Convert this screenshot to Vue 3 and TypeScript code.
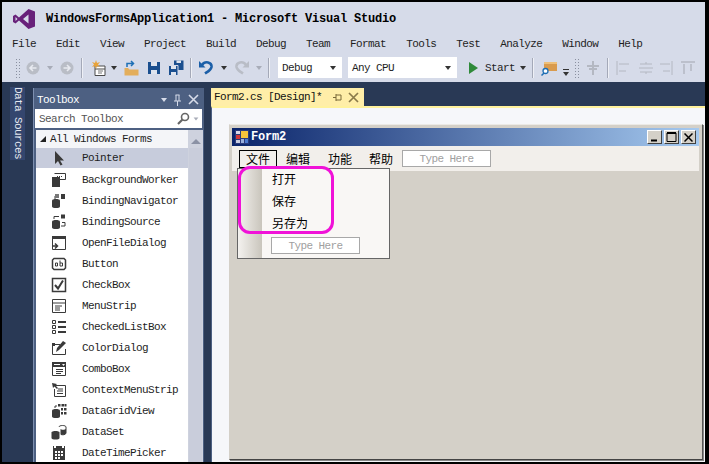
<script setup lang="ts">
interface Shape { d: string; fill?: string; stroke?: string; sw?: number }
interface Tool { name: string; icon: Shape[] }

const D = '#3a3a3a'
const menus = ['File', 'Edit', 'View', 'Project', 'Build', 'Debug', 'Team', 'Format', 'Tools', 'Test', 'Analyze', 'Window', 'Help']
const line = (d: string, sw = 1, stroke = D): Shape => ({ d, stroke, sw, fill: 'none' })
const solid = (d: string, fill = D): Shape => ({ d, fill })
const db = 'M1 7.500C1 5.500 9 5.500 9 7.500V13.500C9 15.500 1 15.500 1 13.500Z'

const tools: Tool[] = [
  { name: 'Pointer', icon: [solid('M4 1V14L7 11L9.500 15.500L11.500 14.500L9 10.500H13Z')] },
  { name: 'BackgroundWorker', icon: [solid('M1 5H9V15H1Z'), line('M3.500 1.500H14.500V7.500H9'), solid('M6 4H7V5H6ZM8 4H9V5H8ZM10 4H11V5H10Z')] },
  { name: 'BindingNavigator', icon: [solid(db), line('M4 3V6'), solid('M10 1H14V6H10Z'), solid('M4 1H8V5H4Z', '#777')] },
  { name: 'BindingSource', icon: [solid(db), line('M3 5V2.500H8M11 8.500H14V12H10', 1), solid('M10 0.500H14V4.500H10Z')] },
  { name: 'OpenFileDialog', icon: [line('M1.500 1.500H14.500V14.500H1.500Z'), solid('M1 1H15V4H1Z'), line('M1 11H6M4 8.500L6.500 11L4 13.500', 1.500)] },
  { name: 'Button', icon: [line('M3 2.500H13L14.500 4V12L13 13.500H3L1.500 12V4Z', 1.500), line('M4.500 10V7H6.500V10H4.500M9 4.500V10H11.500V7H9')] },
  { name: 'CheckBox', icon: [line('M1.500 1.500H14.500V14.500H1.500Z', 1.500), line('M4 8L7 11.500L12 3.500', 2)] },
  { name: 'MenuStrip', icon: [line('M1.500 1.500H14.500V14.500H1.500ZM1.500 5H14.500'), line('M4 8H11M4 10H9M4 12H9')] },
  { name: 'CheckedListBox', icon: [line('M1.500 1.500H4.500V4.500H1.500ZM1.500 6.500H4.500V9.500H1.500ZM1.500 11.500H4.500V14.500H1.500Z'), solid('M7 2H15V4H7ZM7 7H15V9H7ZM7 12H15V14H7Z')] },
  { name: 'ColorDialog', icon: [line('M1.500 4.500H9M1.500 4.500V14.500H14.500V9', 1), solid('M1 3H4V6H1ZM3 14H14V15H3Z'), solid('M12 1L15 3L8 10L5 12L6 8Z')] },
  { name: 'ComboBox', icon: [line('M1.500 1.500H14.500V14.500H1.500Z'), solid('M1 1H15V6H1Z'), solid('M3 3H9V4H3Z', '#fff'), solid('M11 3H14L12.500 5Z', '#fff'), line('M5 8.500H12M5 10.500H12M5 12.500H10')] },
  { name: 'ContextMenuStrip', icon: [line('M3 3.500H14.500V14.500H3.500V7'), solid('M1 1L6 2L4.500 3.500L7 6L6 7L3.500 4.500L2 6Z'), line('M7 7H12M6 9H12M6 11.500H12')] },
  { name: 'DataGridView', icon: [solid(db), line('M4 5V3H6'), solid('M7 1H9.500V3.500H7ZM10.500 1H13V3.500H10.500ZM13.500 1H15.500V3.500H13.500ZM10 5H12V7.500H10ZM13 5H15.500V7.500H13ZM10 9H12V11.500H10ZM13 9H15.500V11.500H13Z')] },
  { name: 'DataSet', icon: [solid('M0.500 8.500C0.500 6.500 8.500 6.500 8.500 8.500V14C8.500 16 0.500 16 0.500 14Z'), line('M8 3C8 1 15 1 15 3V9C15 11 11 11 10 10.500', 1), solid('M9.500 5C10 6 14 6 15 5V9.500C13 11 11 11 9.500 10.500Z')] },
  { name: 'DateTimePicker', icon: [solid('M2 1H14V15H2Z'), solid('M3 1H5V3H3ZM11 1H13V3H11Z', '#fff'), solid('M4 6H6V8H4ZM7 6H9V8H7ZM10 6H12V8H10ZM4 9H6V11H4ZM7 9H9V11H7ZM10 9H12V11H10ZM4 12H6V14H4ZM7 12H9V14H7Z', '#fff')] },
]
</script>

<template>
  <div class="frame">
    <header class="titlebar">
      <svg class="logo" viewBox="0 0 22 20" width="22" height="20">
        <path fill="#68217a" d="M15.500 0L22 2.500V17.500L15.500 20L6 11.500L2.500 14.500L0 13V7L2.500 5.500L6 8.500ZM15.500 5.500L10 10L15.500 14.500ZM2.500 8V12L4.500 10Z" />
      </svg>
      <span class="title">WindowsFormsApplication1 - Microsoft Visual Studio</span>
    </header>

    <nav class="menubar">
      <span v-for="m in menus" :key="m">{{ m }}</span>
    </nav>

    <div class="toolbar">
      <i class="grip"></i>
      <svg class="back" width="16" height="16" viewBox="0 0 16 16"><circle cx="8" cy="8" r="6.500" fill="#b9bdc6" /><path d="M11.500 8H5M8 5L5 8L8 11" stroke="#e8eaf0" stroke-width="1.600" fill="none" /></svg>
      <i class="caret off c1"></i>
      <svg class="fwd" width="16" height="16" viewBox="0 0 16 16"><circle cx="8" cy="8" r="6.500" fill="#b9bdc6" /><path d="M4.500 8H11M8 5L11 8L8 11" stroke="#e8eaf0" stroke-width="1.600" fill="none" /></svg>
      <i class="sep s1"></i>
      <svg class="newp" width="16" height="18" viewBox="0 0 16 18"><path d="M4 7H14V16.500H4Z M4 10H14" stroke="#4a4a4a" fill="#fff" /><path d="M5 1L6 4L9 3L7 5.500L9 8L6 7L5 10L4 7L1 8L3 5.500L1 3L4 4Z" fill="#e8a33a" /><path d="M7 12H12M7 14H11" stroke="#777" /></svg>
      <i class="caret c2"></i>
      <svg class="open" width="15" height="16" viewBox="0 0 15 16"><path d="M0.500 8H4L5.500 9.500H14.500V15.500H0.500Z" fill="#e3ae5c" /><path d="M3 7V3.500H9M7 1L9.500 3.500L7 6" stroke="#1e6fb5" stroke-width="1.500" fill="none" /></svg>
      <svg class="save" width="14" height="14" viewBox="0 0 14 14"><path d="M1 1H13V13H1Z" fill="#1b4f8f" /><path d="M4 1H10V5H4ZM4 9H10V13H4Z" fill="#dfe4ee" /></svg>
      <svg class="saveall" width="16" height="16" viewBox="0 0 16 16"><path d="M6 0.500H15.500V10H6Z" fill="#1b4f8f" /><path d="M8.500 0.500H13V3H8.500Z" fill="#dfe4ee" /><path d="M0.500 5.500H10V15.500H0.500Z" fill="#1b4f8f" stroke="#d6dbe9" /><path d="M3 6H8V9H3ZM3 12H8V15H3Z" fill="#dfe4ee" /></svg>
      <i class="sep s2"></i>
      <svg class="undo" width="14" height="15" viewBox="0 0 14 15"><path d="M3 5C6 0.500 13 2 12.500 7C12 10 9 11.500 6 13.500" stroke="#1b5fa8" stroke-width="2.600" fill="none" /><path d="M0 1V7.500H6.500Z" fill="#1b5fa8" /></svg>
      <i class="caret c3"></i>
      <svg class="redo" width="14" height="15" viewBox="0 0 14 15"><path d="M11 5C8 0.500 1 2 1.500 7C2 10 5 11.500 8 13.500" stroke="#b9bdc6" stroke-width="2.600" fill="none" /><path d="M14 1V7.500H7.500Z" fill="#b9bdc6" /></svg>
      <i class="caret off c4"></i>
      <i class="sep s3"></i>
      <div class="combo debug"><span>Debug</span><i class="caret"></i></div>
      <div class="combo cpu"><span>Any CPU</span><i class="caret"></i></div>
      <i class="play"></i>
      <span class="start">Start</span>
      <i class="caret c5"></i>
      <i class="sep s4"></i>
      <svg class="find" width="16" height="16" viewBox="0 0 16 16"><path d="M3 2H16V11H3Z" fill="#d99b4e" /><path d="M3 2H16V4H3Z" fill="#eec07a" /><circle cx="4.500" cy="11" r="2.500" fill="#fff" stroke="#1e6fb5" stroke-width="1.300" /><path d="M3 13L0.500 15.500" stroke="#1e6fb5" stroke-width="1.500" /></svg>
      <i class="more"></i>
      <i class="grip g2"></i>
      <svg class="align a0" width="14" height="14" viewBox="0 0 14 14"><path d="M7 0V14M1 5H13M3 8H11" stroke="#b4b8c2" stroke-width="2" /></svg>
      <i class="sep s5"></i>
      <svg class="align a1" width="14" height="14" viewBox="0 0 14 14"><path d="M1 0V14M3 3H13M3 10H10" stroke="#b4b8c2" /></svg>
      <svg class="align a2" width="14" height="14" viewBox="0 0 14 14"><path d="M1 3H13M1 11H13M0 7H14M7 1V3M7 11V13" stroke="#b4b8c2" /></svg>
      <svg class="align a3" width="14" height="14" viewBox="0 0 14 14"><path d="M13 0V14M1 3H11M4 10H11" stroke="#b4b8c2" /></svg>
      <svg class="align a4" width="14" height="14" viewBox="0 0 14 14"><path d="M0 1H14M3 3V13M10 3V10" stroke="#b4b8c2" stroke-width="1.500" /></svg>
    </div>

    <main class="workspace">
      <aside class="strip"><span>Data Sources</span></aside>

      <section class="toolbox">
        <div class="tb-head">
          <span>Toolbox</span>
          <span class="tb-actions">
            <i class="caret light"></i>
            <svg width="9" height="12" viewBox="0 0 9 12"><path d="M2.500 1H6.500M3 1V7M6 1V7M1 7H8M4.500 7V12" stroke="#d6dbe9" fill="none" /></svg>
            <svg width="11" height="11" viewBox="0 0 11 11"><path d="M1 1L10 10M10 1L1 10" stroke="#d6dbe9" stroke-width="1.600" /></svg>
          </span>
        </div>
        <div class="tb-search">
          <span>Search Toolbox</span>
          <svg class="mag" width="13" height="13" viewBox="0 0 13 13"><circle cx="8" cy="5" r="3.500" fill="none" stroke="#666" stroke-width="1.600" /><path d="M5.500 7.500L1 12" stroke="#666" stroke-width="2.200" /></svg>
          <i class="caret off small"></i>
        </div>
        <div class="tb-body">
          <div class="tb-list">
            <div class="group"><i class="tri"></i>All Windows Forms</div>
            <div v-for="(t, i) in tools" :key="t.name" class="row" :class="{ active: i === 0 }">
              <svg width="16" height="16" viewBox="0 0 16 16">
                <path v-for="(s, j) in t.icon" :key="j" :d="s.d" :fill="s.fill" :stroke="s.stroke" :stroke-width="s.sw" />
              </svg>
              <span>{{ t.name }}</span>
            </div>
          </div>
          <div class="scroll"><i class="up"></i><div class="thumb"></div></div>
        </div>
      </section>

      <section class="doc">
        <div class="tabs">
          <div class="tab">
            <span>Form2.cs [Design]*</span>
            <svg width="9" height="9" viewBox="0 0 9 9"><path d="M0 4.500H3M3 2H8M3 7H8M3 1V8M8 2V7" stroke="#7a6a3a" fill="none" /></svg>
            <svg width="11" height="11" viewBox="0 0 11 11"><path d="M1 1L10 10M10 1L1 10" stroke="#8a7a4a" stroke-width="1.700" /></svg>
          </div>
        </div>
        <div class="canvas">
          <div class="form">
            <div class="form-title">
              <svg width="14" height="14" viewBox="0 0 14 14">
                <path d="M0 0H14V14H0Z" fill="#2a3a7a" />
                <path d="M1 1H5V4H1Z" fill="#d9d9e8" />
                <path d="M6 1H13V8H6Z" fill="#f5c33b" />
                <path d="M1 5H5V9H1Z" fill="#d0383a" />
                <path d="M6 9H9V13H6Z" fill="#9ab0dc" />
                <path d="M10 9H13V13H10Z" fill="#4a7ad0" />
                <path d="M1 10H5V13H1Z" fill="#c9cde0" />
              </svg>
              <span class="form-name">Form2</span>
              <div class="winbtns">
                <button><svg width="9" height="9" viewBox="0 0 9 9"><path d="M1 7.500H7" stroke="#000" stroke-width="2" /></svg></button>
                <button><svg width="11" height="10" viewBox="0 0 11 10"><path d="M1 1H10V9.500H1Z" stroke="#000" fill="none" /><path d="M1 1H10" stroke="#000" stroke-width="2" /></svg></button>
                <button><svg width="9" height="9" viewBox="0 0 9 9"><path d="M0.500 0.500L8.500 8.500M8.500 0.500L0.500 8.500" stroke="#000" stroke-width="1.500" /></svg></button>
              </div>
            </div>
            <div class="strip-menu">
              <span class="m open-m">文件</span>
              <span class="m wide">编辑</span>
              <span class="m">功能</span>
              <span class="m">帮助</span>
              <span class="typehere top">Type Here</span>
            </div>
            <div class="client">
              <div class="dropdown">
                <div class="margin"></div>
                <div class="items">
                  <div class="item">打开</div>
                  <div class="item">保存</div>
                  <div class="item">另存为</div>
                  <span class="typehere sub">Type Here</span>
                </div>
              </div>
              <div class="marker"></div>
            </div>
          </div>
        </div>
      </section>
    </main>
  </div>
</template>

<style>
html, body { margin: 0; overflow: hidden; background: #000; }
</style>

<style scoped>
.frame {
  width: 709px; height: 464px; box-sizing: border-box;
  border: solid #000; border-width: 2px 4px 2px 2px;
  background: #d6dbe9; display: flex; flex-direction: column; overflow: hidden;
  font: 11px/12px "Liberation Mono", "Noto Sans CJK SC", monospace;
  letter-spacing: -0.6px; color: #1e1e1e;
}
i { display: block; flex: none; }
svg { display: block; flex: none; }

.titlebar { height: 29px; display: flex; align-items: flex-start; padding: 7px 0 0 11px; box-sizing: border-box; flex: none; }
.title { margin: 4px 0 0 11px; font-weight: 700; font-size: 12px; letter-spacing: -0.2px; color: #000; }

.menubar { height: 22px; flex: none; display: flex; gap: 20px; padding: 7px 0 0 10px; box-sizing: border-box; }

.toolbar { height: 29px; flex: none; display: flex; align-items: center; box-sizing: border-box; }
.grip { width: 5px; height: 20px; margin-left: 13px; background-image: radial-gradient(#8a90a0 0.6px, transparent 0.9px); background-size: 3px 3px; }
.sep { width: 1px; height: 20px; background: #a4a9b8; box-shadow: 1px 0 #eef0f6; }
.caret { width: 0; height: 0; border: 3.500px solid transparent; border-top: 4px solid #333; border-bottom: 0; }
.caret.off { border-top-color: #a8acb8; }
.caret.light { border-top-color: #d6dbe9; }
.back { margin-left: 5px; }
.c1 { margin-left: 6px; }
.fwd { margin-left: 6px; }
.s1 { margin-left: 6px; }
.newp { margin-left: 9px; }
.c2 { margin-left: 4px; }
.open { margin-left: 7px; }
.save { margin-left: 8px; }
.saveall { margin-left: 7px; }
.s2 { margin-left: 6px; }
.undo { margin-left: 8px; }
.c3 { margin-left: 7.500px; }
.redo { margin-left: 8.500px; }
.c4 { margin-left: 6.500px; }
.s3 { margin-left: 6.500px; }
.combo { height: 21px; background: #fff; display: flex; align-items: center; justify-content: space-between; padding: 0 6px 0 4px; box-sizing: border-box; flex: none; }
.debug { width: 64px; margin-left: 9px; }
.cpu { width: 109px; margin-left: 6px; }
.play { width: 0; height: 0; border: solid transparent; border-width: 6px 0 6px 9px; border-left-color: #2f8a3a; margin-left: 12px; }
.start { margin-left: 7px; }
.c5 { margin-left: 4.500px; }
.s4 { margin-left: 6.500px; }
.find { margin-left: 8px; }
.more { width: 6px; height: 7px; margin: 9px 0 0 6px; border-top: 1px solid #333; box-sizing: border-box; position: relative; }
.more::after { content: ""; display: block; margin-top: 2px; border: 3px solid transparent; border-top: 4px solid #333; border-bottom: 0; width: 0; }
.g2 { margin-left: 5px; }
.a0 { margin-left: 7px; }
.s5 { margin-left: 7px; }
.a1 { margin-left: 8px; }
.a2 { margin-left: 9px; }
.a3 { margin-left: 6px; }
.a4 { margin-left: 8px; }

.workspace { flex: 1; min-height: 0; background: #293955; display: grid; grid-template-columns: 31px 171px 1fr; column-gap: 0; padding-top: 6px; }
.strip { margin: -1px 8px 0 8px; height: 73px; background: #34466e; color: #e6e9f2; display: flex; justify-content: center; }
.strip span { writing-mode: vertical-rl; line-height: 14px; }

.toolbox { background: #4d6082; display: flex; flex-direction: column; min-height: 0; margin-right: 0; border-left: 1px solid #7d8fb0; overflow: hidden; }
.tb-head { height: 21px; flex: none; display: flex; align-items: center; justify-content: space-between; padding: 2px 5px 0 3px; box-sizing: border-box; color: #fff; }
.tb-actions { display: flex; align-items: center; gap: 6px; }
.tb-search { height: 19px; flex: none; background: #fff; margin: 0 2px 2px 1px; display: flex; align-items: center; padding-left: 4px; color: #555; }
.mag { margin-left: auto; }
.small { margin: 0 3px 0 3px; transform: scale(.8); }
.tb-body { flex: 1; min-height: 0; display: flex; background: #fff; margin: 0 1px 0 2px; overflow: hidden; }
.tb-list { width: 152px; flex: none; background: #fff; }
.group { height: 18px; display: flex; align-items: center; background: #f4f5f8; padding-left: 4px; }
.tri { width: 0; height: 0; border: solid transparent; border-width: 0 0 6px 6px; border-bottom-color: #222; margin-right: 4px; }
.row { height: 21px; display: flex; align-items: center; padding-left: 15px; }
.row.active { background: #c7ccdc; height: 20px; margin-bottom: 1px; width: 150px; }
.row span { margin-left: 15px; }
.scroll { width: 15px; flex: none; background: #ced2de; }
.up { width: 0; height: 0; margin: 9px auto 0; border: solid transparent; border-width: 0 5px 5px; border-bottom-color: #8b92a5; }
.thumb { height: 100%; margin: 4px 1px 0; background: #c9cddb; }

.doc { display: flex; flex-direction: column; min-height: 0; margin-left: 7px; }
.tabs { height: 18px; flex: none; }
.tab { width: 153px; height: 18px; background: #ffeea8; display: flex; align-items: center; box-sizing: border-box; padding-left: 3px; color: #111; }
.tab svg:first-of-type { margin-left: 11px; }
.tab svg:last-of-type { margin-left: 6px; }
.canvas { flex: 1; min-height: 0; background: #f6f7fa; border-top: 2px solid #fff29d; border-left: 1px solid #4d6082; padding: 16px 2px 2px 17px; display: flex; }
.form { flex: 1; display: flex; flex-direction: column; background: #d4d0c8; box-sizing: border-box; padding: 3px 3px 3px 2px; border: 1px solid #777; border-color: #eceae6 #555 #444 #d4d0c8; box-shadow: 1px 1px 0 #888; }
.form-title { height: 18px; flex: none; display: flex; align-items: center; padding-left: 3px; background: linear-gradient(90deg, #0a246a, #a6caf0); }
.form-name { margin-left: 2px; color: #fff; font-weight: 700; font-size: 12px; letter-spacing: -0.2px; }
.winbtns { margin-left: auto; display: flex; gap: 2px; margin-right: 3px; }
.winbtns button { width: 15px; height: 14px; padding: 0; background: #d4d0c8; border: 1px solid; border-color: #fff #404040 #404040 #fff; display: flex; align-items: center; justify-content: center; }
.strip-menu { height: 25px; flex: none; display: flex; align-items: center; background: #f2efeb; padding-left: 7px; box-sizing: border-box; position: relative; font: 12px/16px "Noto Sans CJK SC", sans-serif; letter-spacing: 0; color: #000; }
.m { margin-right: 17px; }
.m.wide { margin-right: 18px; }
.open-m { border: 1px solid #000; padding: 0 6px; margin-right: 9px; height: 16px; background: #f2efeb; }
.typehere { border: 1px solid #a8a8a8; box-sizing: border-box; width: 89px; height: 17px; background: #fff; color: #a0a0a0; display: flex; align-items: center; justify-content: center; font: 11px/12px "Liberation Mono", monospace; letter-spacing: -0.6px; }
.top { margin-left: -8px; }
.client { flex: 1; position: relative; }
.dropdown { position: absolute; left: 5px; top: -3px; width: 153px; height: 91px; box-sizing: border-box; border: 1px solid #666; background: #f9f7f5; display: flex; }
.margin { width: 24px; flex: none; background: linear-gradient(90deg, #f4f2ef, #c9c5bc); }
.items { flex: 1; margin-top: -1px; padding: 0 0 0 10px; font: 12px/22px "Noto Sans CJK SC", sans-serif; letter-spacing: 0; color: #000; }
.item { height: 22px; }
.sub { margin: 3px 0 0 -1px; }
.marker { position: absolute; left: 6px; top: -5px; width: 96px; height: 68px; box-sizing: border-box; border: 3px solid #f012d8; border-radius: 12px; }
</style>
